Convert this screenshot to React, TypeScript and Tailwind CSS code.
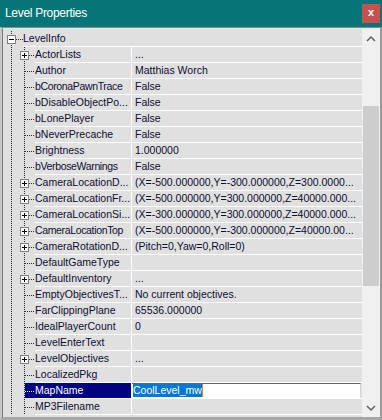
import React from "react";

type Kind = "plus" | "leaf";
type Row = { label: string; value: string; kind: Kind; tight?: boolean; sel?: boolean };

const rows: Row[] = [
  { label: "ActorLists", value: "...", kind: "plus" },
  { label: "Author", value: "Matthias Worch", kind: "leaf" },
  { label: "bCoronaPawnTrace", value: "False", kind: "leaf", tight: true },
  { label: "bDisableObjectPo...", value: "False", kind: "leaf" },
  { label: "bLonePlayer", value: "False", kind: "leaf" },
  { label: "bNeverPrecache", value: "False", kind: "leaf" },
  { label: "Brightness", value: "1.000000", kind: "leaf" },
  { label: "bVerboseWarnings", value: "False", kind: "leaf", tight: true },
  { label: "CameraLocationD...", value: "(X=-500.000000,Y=-300.000000,Z=300.0000...", kind: "plus" },
  { label: "CameraLocationFr...", value: "(X=-500.000000,Y=300.000000,Z=40000.000...", kind: "plus" },
  { label: "CameraLocationSi...", value: "(X=-300.000000,Y=300.000000,Z=40000.000...", kind: "plus" },
  { label: "CameraLocationTop", value: "(X=-500.000000,Y=-300.000000,Z=40000.00...", kind: "plus", tight: true },
  { label: "CameraRotationD...", value: "(Pitch=0,Yaw=0,Roll=0)", kind: "plus" },
  { label: "DefaultGameType", value: "", kind: "leaf" },
  { label: "DefaultInventory", value: "...", kind: "plus" },
  { label: "EmptyObjectivesT...", value: "No current objectives.", kind: "leaf" },
  { label: "FarClippingPlane", value: "65536.000000", kind: "leaf" },
  { label: "IdealPlayerCount", value: "0", kind: "leaf" },
  { label: "LevelEnterText", value: "", kind: "leaf" },
  { label: "LevelObjectives", value: "...", kind: "plus" },
  { label: "LocalizedPkg", value: "", kind: "leaf" },
  { label: "MapName", value: "CoolLevel_mw", kind: "leaf", sel: true },
  { label: "MP3Filename", value: "", kind: "leaf" },
];

const DOT = "#2a2a2a";

function Gutter({ kind, sel }: { kind: Kind; sel?: boolean }) {
  return (
    <svg width={32} height={16} className="shrink-0 block" shapeRendering="crispEdges">
      <line x1={8.5} y1={0} x2={8.5} y2={16} stroke={DOT} strokeDasharray="1 1" />
      {sel && <rect x={22} y={0} width={10} height={15} fill="#000080" />}
      <line x1={21.5} y1={0} x2={21.5} y2={16} stroke={DOT} strokeDasharray="1 1" />
      {kind === "plus" ? (
        <>
          <rect x={17.5} y={4.5} width={8} height={8} fill="#ffffff" stroke="#808080" />
          <line x1={19} y1={8.5} x2={24} y2={8.5} stroke="#000" />
          <line x1={21.5} y1={6} x2={21.5} y2={11} stroke="#000" />
          <line x1={26} y1={8.5} x2={32} y2={8.5} stroke={DOT} strokeDasharray="1 1" />
        </>
      ) : (
        <line x1={22} y1={8.5} x2={32} y2={8.5} stroke={sel ? "#ffffff" : DOT} strokeDasharray="1 1" />
      )}
    </svg>
  );
}

function HeaderGutter() {
  return (
    <svg width={20} height={16} className="shrink-0 block" shapeRendering="crispEdges">
      <line x1={8.5} y1={0} x2={8.5} y2={16} stroke={DOT} strokeDasharray="1 1" />
      <rect x={4.5} y={4.5} width={8} height={8} fill="#ffffff" stroke="#808080" />
      <line x1={6} y1={8.5} x2={11} y2={8.5} stroke="#000" />
      <line x1={13} y1={8.5} x2={20} y2={8.5} stroke={DOT} strokeDasharray="1 1" />
    </svg>
  );
}

export default function App() {
  return (
    <div className="w-[382px] h-[420px] flex flex-col overflow-hidden bg-[#f0f0f0] font-['Liberation_Sans',Arial,sans-serif]">
      <div className="h-[27px] shrink-0 bg-[#077577] flex items-start justify-between">
        <span className="text-white text-[12px] tracking-[-0.3px] leading-[27px] pl-[5px]">Level Properties</span>
        <div className="mt-[4px] mr-[2px] w-[18px] h-[19px] bg-[#c75050] flex items-center justify-center text-white text-[11px] font-bold leading-none pb-[2px]">
          x
        </div>
      </div>
      <div className="flex-1 flex flex-col border-t border-t-[#8a8a8a] border-l-2 border-l-[#c8c8c8] border-r-2 border-r-[#9a9a9a] border-b-[3px] border-b-[#a6a6a6]">
        <div className="flex-1 flex border-t border-t-[#e8e8e8] border-l border-l-[#7a7a7a]">
          <div className="w-[359px] bg-[#e0e0e0] pt-[2px] text-[10.5px] text-[#0e0e30] leading-[15px]">
            <div className="flex h-[16px]">
              <HeaderGutter />
              <div className="flex-1 h-[16px] border-b border-white pl-[0px] whitespace-nowrap">LevelInfo</div>
            </div>
            {rows.map((r) => (
              <div key={r.label} className="flex h-[16px]">
                <Gutter kind={r.kind} sel={r.sel} />
                <div
                  className={`w-[96px] h-[16px] border-b border-white overflow-hidden whitespace-nowrap ${
                    r.sel ? "bg-[#000080] text-white" : ""
                  } ${r.tight ? "tracking-[-0.35px]" : ""}`}
                >
                  {r.label}
                </div>
                <div className="w-[1px] h-[16px] bg-white" />
                {r.sel ? (
                  <div className="w-[230px] h-[16px] border-b border-white flex">
                    <div className="w-[229px] h-[15px] bg-white border-t border-t-[#646464] border-r border-r-[#d8d8d8] flex items-start pl-[1px]">
                      <span className="bg-[#0078d7] text-white leading-[13px] h-[13px] mt-[0px]">{r.value}</span>
                      <span className="w-[1px] h-[13px] bg-[#f08020]" />
                    </div>
                  </div>
                ) : (
                  <div className="w-[230px] h-[16px] border-b border-white pl-[3px] overflow-hidden whitespace-nowrap">
                    {r.value}
                  </div>
                )}
              </div>
            ))}
          </div>
          <div className="w-[18px] bg-[#f0f0f0] flex flex-col">
            <div className="h-[19px] flex items-center justify-center">
              <svg width={18} height={19}>
                <path d="M5 12 L9 8 L13 12" fill="none" stroke="#606060" strokeWidth={1.5} />
              </svg>
            </div>
            <div className="flex-1 flex flex-col">
              <div className="h-[58px]" />
              <div className="h-[180px] mx-[1px] bg-[#cdcdcd]" />
              <div className="flex-1" />
            </div>
            <div className="h-[19px] flex items-center justify-center">
              <svg width={18} height={19}>
                <path d="M5 8 L9 12 L13 8" fill="none" stroke="#606060" strokeWidth={1.5} />
              </svg>
            </div>
          </div>
        </div>
      </div>
    </div>
  );
}
